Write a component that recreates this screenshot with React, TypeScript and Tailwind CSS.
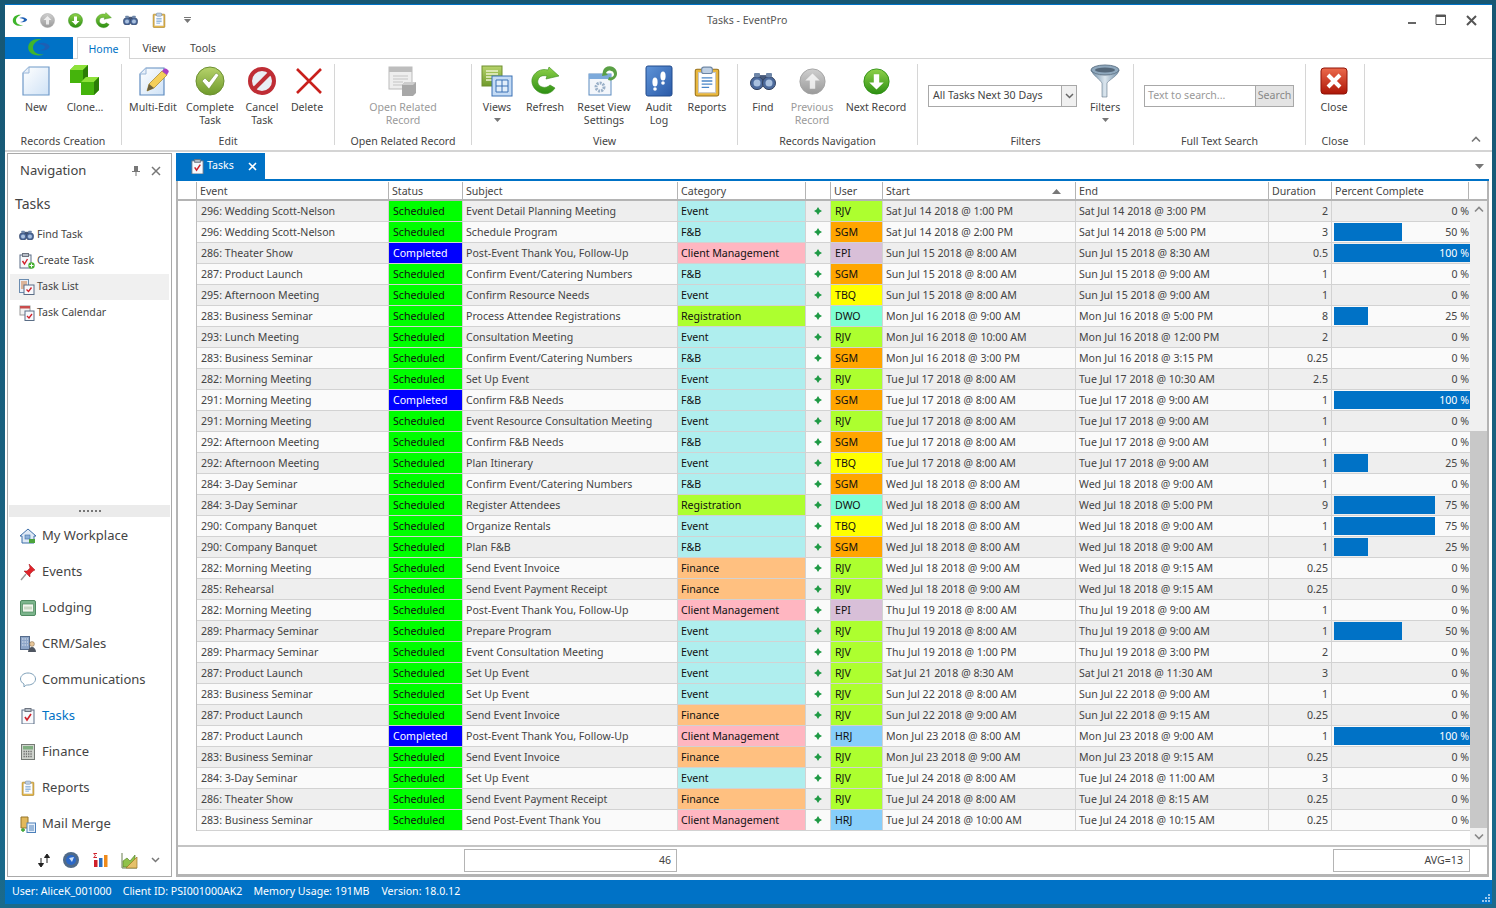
import React from "react";

type IconProps = { s?: number };

const rowData = `296: Wedding Scott-Nelson|S|Event Detail Planning Meeting|Event|RJV|Sat Jul 14 2018 @ 1:00 PM|Sat Jul 14 2018 @ 3:00 PM|2|0
296: Wedding Scott-Nelson|S|Schedule Program|F&B|SGM|Sat Jul 14 2018 @ 2:00 PM|Sat Jul 14 2018 @ 5:00 PM|3|50
286: Theater Show|C|Post-Event Thank You, Follow-Up|Client Management|EPI|Sun Jul 15 2018 @ 8:00 AM|Sun Jul 15 2018 @ 8:30 AM|0.5|100
287: Product Launch|S|Confirm Event/Catering Numbers|F&B|SGM|Sun Jul 15 2018 @ 8:00 AM|Sun Jul 15 2018 @ 9:00 AM|1|0
295: Afternoon Meeting|S|Confirm Resource Needs|Event|TBQ|Sun Jul 15 2018 @ 8:00 AM|Sun Jul 15 2018 @ 9:00 AM|1|0
283: Business Seminar|S|Process Attendee Registrations|Registration|DWO|Mon Jul 16 2018 @ 9:00 AM|Mon Jul 16 2018 @ 5:00 PM|8|25
293: Lunch Meeting|S|Consultation Meeting|Event|RJV|Mon Jul 16 2018 @ 10:00 AM|Mon Jul 16 2018 @ 12:00 PM|2|0
283: Business Seminar|S|Confirm Event/Catering Numbers|F&B|SGM|Mon Jul 16 2018 @ 3:00 PM|Mon Jul 16 2018 @ 3:15 PM|0.25|0
282: Morning Meeting|S|Set Up Event|Event|RJV|Tue Jul 17 2018 @ 8:00 AM|Tue Jul 17 2018 @ 10:30 AM|2.5|0
291: Morning Meeting|C|Confirm F&B Needs|F&B|SGM|Tue Jul 17 2018 @ 8:00 AM|Tue Jul 17 2018 @ 9:00 AM|1|100
291: Morning Meeting|S|Event Resource Consultation Meeting|Event|RJV|Tue Jul 17 2018 @ 8:00 AM|Tue Jul 17 2018 @ 9:00 AM|1|0
292: Afternoon Meeting|S|Confirm F&B Needs|F&B|SGM|Tue Jul 17 2018 @ 8:00 AM|Tue Jul 17 2018 @ 9:00 AM|1|0
292: Afternoon Meeting|S|Plan Itinerary|Event|TBQ|Tue Jul 17 2018 @ 8:00 AM|Tue Jul 17 2018 @ 9:00 AM|1|25
284: 3-Day Seminar|S|Confirm Event/Catering Numbers|F&B|SGM|Wed Jul 18 2018 @ 8:00 AM|Wed Jul 18 2018 @ 9:00 AM|1|0
284: 3-Day Seminar|S|Register Attendees|Registration|DWO|Wed Jul 18 2018 @ 8:00 AM|Wed Jul 18 2018 @ 5:00 PM|9|75
290: Company Banquet|S|Organize Rentals|Event|TBQ|Wed Jul 18 2018 @ 8:00 AM|Wed Jul 18 2018 @ 9:00 AM|1|75
290: Company Banquet|S|Plan F&B|F&B|SGM|Wed Jul 18 2018 @ 8:00 AM|Wed Jul 18 2018 @ 9:00 AM|1|25
282: Morning Meeting|S|Send Event Invoice|Finance|RJV|Wed Jul 18 2018 @ 9:00 AM|Wed Jul 18 2018 @ 9:15 AM|0.25|0
285: Rehearsal|S|Send Event Payment Receipt|Finance|RJV|Wed Jul 18 2018 @ 9:00 AM|Wed Jul 18 2018 @ 9:15 AM|0.25|0
282: Morning Meeting|S|Post-Event Thank You, Follow-Up|Client Management|EPI|Thu Jul 19 2018 @ 8:00 AM|Thu Jul 19 2018 @ 9:00 AM|1|0
289: Pharmacy Seminar|S|Prepare Program|Event|RJV|Thu Jul 19 2018 @ 8:00 AM|Thu Jul 19 2018 @ 9:00 AM|1|50
289: Pharmacy Seminar|S|Event Consultation Meeting|Event|RJV|Thu Jul 19 2018 @ 1:00 PM|Thu Jul 19 2018 @ 3:00 PM|2|0
287: Product Launch|S|Set Up Event|Event|RJV|Sat Jul 21 2018 @ 8:30 AM|Sat Jul 21 2018 @ 11:30 AM|3|0
283: Business Seminar|S|Set Up Event|Event|RJV|Sun Jul 22 2018 @ 8:00 AM|Sun Jul 22 2018 @ 9:00 AM|1|0
287: Product Launch|S|Send Event Invoice|Finance|RJV|Sun Jul 22 2018 @ 9:00 AM|Sun Jul 22 2018 @ 9:15 AM|0.25|0
287: Product Launch|C|Post-Event Thank You, Follow-Up|Client Management|HRJ|Mon Jul 23 2018 @ 8:00 AM|Mon Jul 23 2018 @ 9:00 AM|1|100
283: Business Seminar|S|Send Event Invoice|Finance|RJV|Mon Jul 23 2018 @ 9:00 AM|Mon Jul 23 2018 @ 9:15 AM|0.25|0
284: 3-Day Seminar|S|Set Up Event|Event|RJV|Tue Jul 24 2018 @ 8:00 AM|Tue Jul 24 2018 @ 11:00 AM|3|0
286: Theater Show|S|Send Event Payment Receipt|Finance|RJV|Tue Jul 24 2018 @ 8:00 AM|Tue Jul 24 2018 @ 8:15 AM|0.25|0
283: Business Seminar|S|Send Post-Event Thank You|Client Management|HRJ|Tue Jul 24 2018 @ 10:00 AM|Tue Jul 24 2018 @ 10:15 AM|0.25|0`
  .split("\n")
  .map((line) => line.split("|"));

const categoryBg: Record<string, string> = {
  Event: "bg-[#afeeee]",
  "F&B": "bg-[#afeeee]",
  "Client Management": "bg-[#ffb6c1]",
  Registration: "bg-[#adff2f]",
  Finance: "bg-[#ffc080]",
};

const userBg: Record<string, string> = {
  RJV: "bg-[#adff2f]",
  SGM: "bg-[#ffa500]",
  EPI: "bg-[#d8bfd8]",
  TBQ: "bg-[#ffff00]",
  DWO: "bg-[#7fffd4]",
  HRJ: "bg-[#87cefa]",
};

const barWidth: Record<string, string> = {
  "25": "w-[34px]",
  "50": "w-[68px]",
  "75": "w-[101px]",
  "100": "w-[136px]",
};

const gridCols =
  "grid grid-cols-[192px_74px_215px_128px_25px_52px_193px_193px_63px_138px]";

const Defs = () => (
  <svg className="block h-0 w-0">
    <defs>
      <linearGradient id="gGreen" x1="0" y1="0" x2="0" y2="1">
        <stop offset="0" stopColor="#8fd14a" />
        <stop offset="1" stopColor="#2c8f12" />
      </linearGradient>
      <linearGradient id="gOlive" x1="0" y1="0" x2="0" y2="1">
        <stop offset="0" stopColor="#b7d36c" />
        <stop offset="1" stopColor="#6f9a2b" />
      </linearGradient>
      <linearGradient id="gGray" x1="0" y1="0" x2="0" y2="1">
        <stop offset="0" stopColor="#cfcfcf" />
        <stop offset="1" stopColor="#9a9a9a" />
      </linearGradient>
      <linearGradient id="gPaper" x1="0" y1="0" x2="1" y2="1">
        <stop offset="0" stopColor="#ffffff" />
        <stop offset="1" stopColor="#cfe2f6" />
      </linearGradient>
      <linearGradient id="gBlue" x1="0" y1="0" x2="1" y2="1">
        <stop offset="0" stopColor="#5f94d8" />
        <stop offset="1" stopColor="#2a5aa8" />
      </linearGradient>
      <linearGradient id="gRed" x1="0" y1="0" x2="0" y2="1">
        <stop offset="0" stopColor="#ec6a4c" />
        <stop offset="1" stopColor="#ad1607" />
      </linearGradient>
      <linearGradient id="gSteel" x1="0" y1="0" x2="1" y2="0">
        <stop offset="0" stopColor="#6f8ea8" />
        <stop offset=".5" stopColor="#dbe6ee" />
        <stop offset="1" stopColor="#6f8ea8" />
      </linearGradient>
    </defs>
  </svg>
);

const Logo = ({ s = 16 }: IconProps) => (
  <svg width={s} height={s * 0.8} viewBox="0 0 20 16">
    <path d="M12 1C6 0 1 3 1 8c0 5 6 8 13 6-5 0-9-2-9-6 0-3 3-6 7-7z" fill="#3fb52c" />
    <path d="M9 5c4-2 8-1 10 2-1 3-5 4-9 3 3 0 5-1 5-3-1-1-4-2-6-2z" fill="#1d5fb4" />
  </svg>
);

const RoundArrow = ({ s = 27, up, gray }: IconProps & { up?: boolean; gray?: boolean }) => (
  <svg width={s} height={s} viewBox="0 0 30 30">
    <circle cx="15" cy="15" r="14" fill={gray ? "url(#gGray)" : "url(#gGreen)"} stroke={gray ? "#a0a0a0" : "#2c8f12"} />
    <path
      d={up ? "M15 6l8 8h-5v9h-6v-9H7z" : "M15 24l8-8h-5V7h-6v9H7z"}
      fill="#fff"
      opacity={gray ? 0.75 : 1}
    />
  </svg>
);

const Refresh = ({ s = 30 }: IconProps) => (
  <svg width={s} height={s} viewBox="0 0 30 30">
    <path
      d="M25 22c-3 5-9 7-14 5C5 25 1 19 2 13 4 6 11 2 18 4l1-3 10 9-13 3 1-3c-4-1-8 0-9 4-1 3 1 6 4 7 3 1 6 0 8-2z"
      fill="url(#gGreen)"
      stroke="#3a8f1c"
      strokeWidth=".6"
    />
  </svg>
);

const Binoculars = ({ s = 26 }: IconProps) => (
  <svg width={s} height={s * 0.7} viewBox="0 0 26 18">
    <rect x="9" y="3" width="8" height="6" fill="#47597a" />
    <circle cx="7" cy="11" r="6.5" fill="#4c6a9c" stroke="#33415c" />
    <circle cx="19" cy="11" r="6.5" fill="#4c6a9c" stroke="#33415c" />
    <circle cx="7" cy="11" r="3.5" fill="#a9c0de" />
    <circle cx="19" cy="11" r="3.5" fill="#a9c0de" />
    <rect x="4" y="1" width="6" height="4" rx="1" fill="#6e86a8" />
    <rect x="16" y="1" width="6" height="4" rx="1" fill="#6e86a8" />
  </svg>
);

const Clipboard = ({ s = 30 }: IconProps) => (
  <svg width={s} height={s} viewBox="0 0 30 30">
    <rect x="4" y="4" width="22" height="25" rx="1.5" fill="#e9b73c" stroke="#96701a" />
    <rect x="7" y="7" width="16" height="19" fill="#fff" stroke="#c7c7c7" />
    <rect x="10" y="2" width="10" height="6" rx="2" fill="#bfd0e4" stroke="#6d86a4" />
    <path d="M10 12h10M10 15h10M10 18h10M10 21h7" stroke="#4a86c8" strokeWidth="1.2" />
  </svg>
);

const NewDoc = () => (
  <svg width="30" height="32" viewBox="0 0 30 32">
    <path d="M8 2h20v28H2V8z" fill="url(#gPaper)" stroke="#6f99c8" strokeWidth="1.2" />
    <path d="M8 2v6H2" fill="#e8f0f9" stroke="#9ab7d8" />
  </svg>
);

const Cube = ({ x, y }: { x: number; y: number }) => (
  <g transform={`translate(${x} ${y})`}>
    <path d="M0 5l5-5h13v13l-5 5H0z" fill="#45b40c" />
    <path d="M0 5l5-5h13l-5 5z" fill="#8ee23a" />
    <path d="M13 5l5-5v13l-5 5z" fill="#2a7d06" />
  </g>
);

const Clone = () => (
  <svg width="30" height="32" viewBox="0 0 30 32">
    <Cube x={0} y={0} />
    <Cube x={11} y={12} />
  </svg>
);

const MultiEdit = () => (
  <svg width="30" height="32" viewBox="0 0 30 32" className="ml-[2px]">
    <path d="M7 3h18v27H1V9z" fill="url(#gPaper)" stroke="#5f8cc0" strokeWidth="1.2" />
    <path d="M7 3v6H1" fill="#e8f0f9" stroke="#9ab7d8" />
    <path d="M8 26l2-7L23 6l5 4-13 13z" fill="#f4cf5a" stroke="#a5842a" strokeWidth=".7" />
    <path d="M23 6l2-2c1-1 3 0 4 1s1 2 0 3l-1 2z" fill="#a93fc4" />
    <path d="M8 26l2-7 5 4z" fill="#333" opacity=".7" />
  </svg>
);

const Complete = () => (
  <svg width="30" height="30" viewBox="0 0 30 30">
    <circle cx="15" cy="15" r="14" fill="url(#gOlive)" stroke="#6b8f30" />
    <path d="M7 15l3-3 4 4 7-9 3 2-10 14z" fill="#fff" stroke="#5f8227" strokeWidth=".5" />
  </svg>
);

const Cancel = () => (
  <svg width="30" height="30" viewBox="0 0 30 30">
    <circle cx="15" cy="15" r="12" fill="#e9eef5" stroke="#bf2d35" strokeWidth="4" />
    <path d="M7 23L23 7" stroke="#bf2d35" strokeWidth="4" />
  </svg>
);

const DeleteX = () => (
  <svg width="30" height="30" viewBox="0 0 30 30" className="ml-[3px]">
    <path d="M3 3l24 24M27 3L3 27" stroke="#c9201c" strokeWidth="2.6" />
  </svg>
);

const OpenRelated = () => (
  <svg width="30" height="32" viewBox="0 0 30 32">
    <rect x="1" y="2" width="23" height="22" fill="#eee" stroke="#bbb" />
    <rect x="1" y="2" width="23" height="5" fill="#bdbdbd" />
    <path d="M5 11h15M5 14h15M5 17h10M5 20h10" stroke="#c4c4c4" />
    <path d="M14 20l3-3h11v11l-3 3H14z" fill="#a8a8a8" />
    <path d="M14 20l3-3h11l-3 3z" fill="#cdcdcd" />
  </svg>
);

const Views = () => (
  <svg width="32" height="32" viewBox="0 0 32 32">
    <rect x="1" y="1" width="20" height="20" fill="url(#gOlive)" stroke="#6f8f2f" />
    <path d="M5 6h12M5 9h12M5 12h12M5 15h8" stroke="#eef4d0" strokeWidth="1.4" />
    <rect x="11" y="11" width="20" height="20" fill="#c4dbf5" stroke="#3a70b4" />
    <path d="M15 15h12v12H15zM15 21h12M21 15v12" fill="#e2eefa" stroke="#3a70b4" />
  </svg>
);

const ResetView = () => (
  <svg width="32" height="32" viewBox="0 0 32 32">
    <rect x="1" y="9" width="22" height="21" fill="#f3f6fb" stroke="#5c8cc0" />
    <rect x="1" y="9" width="22" height="5" fill="#7daadb" />
    <circle cx="12" cy="22" r="4" fill="none" stroke="#9ab0c8" strokeWidth="3" strokeDasharray="2 1" />
    <path d="M15 6c1-4 6-6 10-4 4 2 5 7 3 10-2 3-5 4-8 3l1-3c2 1 4 0 5-2 0-2-1-4-3-4-2-1-4 0-5 2l2 2-6 1z" fill="#5aa045" />
  </svg>
);

const Audit = () => (
  <svg width="28" height="32" viewBox="0 0 28 32">
    <rect x="1" y="1" width="26" height="30" rx="2" fill="url(#gBlue)" stroke="#214a8c" />
    <ellipse cx="10" cy="17" rx="2.6" ry="4.5" fill="#fff" />
    <circle cx="10" cy="24" r="1.8" fill="#fff" />
    <ellipse cx="18" cy="11" rx="2.6" ry="4.5" fill="#fff" />
    <circle cx="18" cy="18" r="1.8" fill="#fff" />
  </svg>
);

const Funnel = () => (
  <svg width="30" height="34" viewBox="0 0 30 34">
    <ellipse cx="15" cy="6" rx="14" ry="5" fill="#8fa8bd" stroke="#64798c" />
    <ellipse cx="15" cy="6" rx="10" ry="2.5" fill="#55687a" />
    <path d="M1 6c2 6 9 9 11 13v14h5V19c3-4 11-7 12-13-3 7-25 7-28 0z" fill="url(#gSteel)" stroke="#64798c" strokeWidth=".6" />
  </svg>
);

const CloseRed = () => (
  <svg width="28" height="28" viewBox="0 0 28 28">
    <rect x="1" y="1" width="26" height="26" rx="3" fill="url(#gRed)" stroke="#8f1206" />
    <path d="M8 8l12 12M20 8L8 20" stroke="#fff" strokeWidth="4" />
  </svg>
);

const TaskClip = ({ s = 16 }: IconProps) => (
  <svg width={s} height={s} viewBox="0 0 16 16">
    <rect x="2" y="2" width="12" height="14" fill="#f7f9fc" stroke="#5a6d86" />
    <rect x="5" y="0.5" width="6" height="3" fill="#b9bfc8" stroke="#6d7480" />
    <path d="M5 9l2 3 4-6" fill="none" stroke="#d0202a" strokeWidth="1.6" />
  </svg>
);

const NavIcons: Record<string, React.ReactNode> = {
  "My Workplace": (
    <svg width="16" height="16" viewBox="0 0 16 16">
      <path d="M8 1L0 8h2v7h12V8h2z" fill="#dfe9f5" stroke="#3d6ea8" />
      <rect x="5" y="7" width="5" height="4" fill="#8db0d8" stroke="#3d6ea8" strokeWidth=".6" />
      <rect x="9" y="11" width="6" height="4" fill="#4ba33a" />
    </svg>
  ),
  Events: (
    <svg width="16" height="18" viewBox="0 0 16 18">
      <path d="M9 1l6 6-2 1-3 3 0 3-6-6 3 0 3-3z" fill="#e0232a" stroke="#a11218" strokeWidth=".5" />
      <path d="M6 11l-5 6" stroke="#999" strokeWidth="1.4" />
    </svg>
  ),
  Lodging: (
    <svg width="16" height="16" viewBox="0 0 16 16">
      <rect x="0.5" y="0.5" width="15" height="15" rx="1.5" fill="#7cb58c" stroke="#4f8a60" />
      <rect x="2.5" y="4" width="11" height="8" fill="#f2f6ee" stroke="#4f8a60" strokeWidth=".7" />
      <rect x="4" y="6.5" width="8" height="3" fill="#c9d8c4" />
    </svg>
  ),
  "CRM/Sales": (
    <svg width="16" height="16" viewBox="0 0 16 16">
      <rect x="0.5" y="0.5" width="9" height="13" fill="#8ea6c8" stroke="#566c8c" />
      <path d="M2 3h6M2 6h6M2 9h6" stroke="#dbe4f0" strokeDasharray="1.5 1" />
      <circle cx="12" cy="8" r="2.4" fill="#e8c79a" stroke="#7a6040" strokeWidth=".5" />
      <path d="M8 16c0-3 2-5 4-5s4 2 4 5z" fill="#4e5560" />
    </svg>
  ),
  Communications: (
    <svg width="16" height="16" viewBox="0 0 16 16">
      <path d="M8 1c4 0 7.5 2.5 7.5 6S12 13 8 13c-1 0-2 0-3 1l-1 1v-3C2 11 .5 9 .5 7 .5 3.500 4 1 8 1z" fill="#fff" stroke="#7d9fb8" />
    </svg>
  ),
  Tasks: <TaskClip />,
  Finance: (
    <svg width="14" height="16" viewBox="0 0 14 16">
      <rect x="0.5" y="0.5" width="13" height="15" fill="#cfd3cd" stroke="#757a75" />
      <rect x="2" y="2" width="10" height="3.500" fill="#7fae80" />
      <path d="M2.500 7.500h9M2.500 10h9M2.500 12.500h9" stroke="#6b6b6b" strokeWidth="1.300" strokeDasharray="1.300 1" />
    </svg>
  ),
  Reports: <Clipboard s={16} />,
  "Mail Merge": (
    <svg width="16" height="17" viewBox="0 0 16 17">
      <path d="M1 1h7v11H1z" fill="#e2b85a" stroke="#94742a" />
      <rect x="7" y="7" width="8.500" height="9.500" fill="#e8f0fa" stroke="#4c80ba" />
      <path d="M9 10h5M9 12h5M9 14h5" stroke="#4c80ba" />
      <path d="M1 14h4M3 12v4" stroke="#36a12a" strokeWidth="1.300" />
    </svg>
  ),
};

const ArrowDropIcon = () => (
  <svg width="7" height="4" viewBox="0 0 7 4" className="block">
    <path d="M0 0h7L3.500 4z" fill="#777" />
  </svg>
);

const RibbonButton = ({
  w,
  icon,
  label,
  label2,
  disabled,
  drop,
}: {
  w: string;
  icon: React.ReactNode;
  label: string;
  label2?: string;
  disabled?: boolean;
  drop?: boolean;
}) => (
  <div className={`flex flex-col items-center ${w} ${disabled ? "text-[#9a9a9a]" : "text-[#444]"}`}>
    <div className="flex h-[34px] items-center justify-center">{icon}</div>
    <div className="mt-[3px] h-[13px] whitespace-nowrap leading-[13px]">{label}</div>
    {label2 && <div className="h-[13px] whitespace-nowrap leading-[13px]">{label2}</div>}
    {drop && (
      <div className="mt-[4px]">
        <ArrowDropIcon />
      </div>
    )}
  </div>
);

const RibbonGroup = ({
  w,
  label,
  children,
  className = "",
}: {
  w: string;
  label: string;
  children: React.ReactNode;
  className?: string;
}) => (
  <div className={`flex h-[81px] flex-col border-r border-[#d6d6d6] ${w}`}>
    <div className={`flex h-[71px] shrink-0 items-start ${className}`}>{children}</div>
    <div className="h-[13px] shrink-0 text-center leading-[13px] text-[#444]">{label}</div>
  </div>
);

const Ribbon = () => (
  <div className="flex h-[93px] border-b-2 border-[#d4d4d4] pt-[5px] text-[10.6px]">
    <RibbonGroup w="w-[117px]" label="Records Creation" className="pl-[9px]">
      <RibbonButton w="w-[44px]" icon={<NewDoc />} label="New" />
      <RibbonButton w="w-[54px]" icon={<Clone />} label="Clone…" />
    </RibbonGroup>
    <RibbonGroup w="w-[213px]" label="Edit" className="pl-[3px]">
      <RibbonButton w="w-[56px]" icon={<MultiEdit />} label="Multi-Edit" />
      <RibbonButton w="w-[58px]" icon={<Complete />} label="Complete" label2="Task" />
      <RibbonButton w="w-[46px]" icon={<Cancel />} label="Cancel" label2="Task" />
      <RibbonButton w="w-[44px]" icon={<DeleteX />} label="Delete" />
    </RibbonGroup>
    <RibbonGroup w="w-[137px]" label="Open Related Record" className="justify-center">
      <RibbonButton w="w-[90px]" icon={<OpenRelated />} label="Open Related" label2="Record" disabled />
    </RibbonGroup>
    <RibbonGroup w="w-[266px]" label="View">
      <RibbonButton w="w-[50px]" icon={<Views />} label="Views" drop />
      <RibbonButton w="w-[46px]" icon={<Refresh />} label="Refresh" />
      <RibbonButton w="w-[72px]" icon={<ResetView />} label="Reset View" label2="Settings" />
      <RibbonButton w="w-[38px]" icon={<Audit />} label="Audit" label2="Log" />
      <RibbonButton w="w-[58px]" icon={<Clipboard s={32} />} label="Reports" />
    </RibbonGroup>
    <RibbonGroup w="w-[180px]" label="Records Navigation">
      <RibbonButton w="w-[50px]" icon={<Binoculars />} label="Find" />
      <RibbonButton w="w-[48px]" icon={<RoundArrow up gray />} label="Previous" label2="Record" disabled />
      <RibbonButton w="w-[80px]" icon={<RoundArrow />} label="Next Record" />
    </RibbonGroup>
    <RibbonGroup w="w-[216px]" label="Filters" className="pl-[10px]">
      <div className="mt-[21px] flex h-[22px] w-[150px] border border-[#a8a8a8] text-[#444]">
        <div className="flex-1 px-[4px] leading-[19px]">All Tasks Next 30 Days</div>
        <div className="flex w-[15px] items-center justify-center border-l border-[#a8a8a8] bg-[#f0f0f0]">
          <svg width="9" height="6" viewBox="0 0 9 6">
            <path d="M1 1l3.500 3.500L8 1" fill="none" stroke="#666" strokeWidth="1.500" />
          </svg>
        </div>
      </div>
      <RibbonButton w="w-[56px]" icon={<Funnel />} label="Filters" drop />
    </RibbonGroup>
    <RibbonGroup w="w-[172px]" label="Full Text Search" className="pl-[10px]">
      <div className="mt-[21px] flex h-[22px] w-[150px] border border-[#a8a8a8]">
        <div className="flex-1 px-[3px] leading-[19px] text-[#999]">Text to search...</div>
        <div className="w-[38px] border-l border-[#a8a8a8] bg-[#e4e4e4] text-center leading-[19px] text-[#888]">Search</div>
      </div>
    </RibbonGroup>
    <RibbonGroup w="w-[59px]" label="Close">
      <RibbonButton w="w-[56px]" icon={<CloseRed />} label="Close" />
    </RibbonGroup>
    <div className="ml-auto mr-[11px] flex items-end pb-[7px]">
      <svg width="10" height="7" viewBox="0 0 10 7">
        <path d="M1 5.500l4-4 4 4" fill="none" stroke="#777" strokeWidth="1.600" />
      </svg>
    </div>
  </div>
);

const TitleBar = () => (
  <div className="flex h-[32px] items-center pb-[2px]">
    <div className="flex items-center gap-[0px] pl-[6px]">
      <div className="flex w-[17px] justify-center"><Logo /></div>
      <div className="ml-[11px] flex w-[16px] justify-center"><RoundArrow s={15} up gray /></div>
      <div className="ml-[12px] flex w-[16px] justify-center"><RoundArrow s={15} /></div>
      <div className="ml-[12px] flex w-[17px] justify-center"><Refresh s={17} /></div>
      <div className="ml-[11px] flex w-[15px] justify-center"><Binoculars s={15} /></div>
      <div className="ml-[13px] flex w-[16px] justify-center"><Clipboard s={16} /></div>
      <div className="ml-[17px]">
        <svg width="7" height="6" viewBox="0 0 7 6" className="block">
          <path d="M0 0h7v1H0zM0 2h7L3.500 6z" fill="#777" />
        </svg>
      </div>
    </div>
    <div className="ml-[516px] pt-[2px] text-[10.6px] text-[#555]">Tasks - EventPro</div>
    <div className="ml-auto flex items-center pr-[15px]">
      <svg width="10" height="10" viewBox="0 0 10 10" className="mr-[18px]">
        <rect x="1" y="7" width="8" height="2" fill="#666" />
      </svg>
      <svg width="12" height="12" viewBox="0 0 12 12" className="mr-[19px]">
        <path d="M1 1h9.500v9.500H1z" fill="none" stroke="#555" />
        <rect x="1" y="1" width="9.500" height="2" fill="#555" />
      </svg>
      <svg width="11" height="11" viewBox="0 0 11 11">
        <path d="M1 1l9 9M10 1l-9 9" stroke="#555" strokeWidth="2" />
      </svg>
    </div>
  </div>
);

const TabRow = () => (
  <div className="flex h-[22px] border-b border-[#d4d4d4] text-[10.6px] text-[#444]">
    <div className="flex h-[22px] w-[68px] items-center justify-center bg-[#0072c6]">
      <Logo s={24} />
    </div>
    <div className="ml-[4px] h-[22px] w-[53px] border border-b-0 border-[#d4d4d4] bg-white text-center leading-[22px] text-[#0072c6]">
      Home
    </div>
    <div className="w-[48px] text-center leading-[22px]">View</div>
    <div className="w-[50px] text-center leading-[22px]">Tools</div>
  </div>
);

const NavPanel = () => (
  <div className="flex w-[165px] flex-col border border-[#a9a9a9] bg-white text-[#444]">
    <div className="flex h-[32px] items-center pl-[12px] pr-[10px] pt-[2px]">
      <span className="text-[13px] text-[#444]">Navigation</span>
      <svg width="8" height="10" viewBox="0 0 8 10" className="ml-auto">
        <path d="M2 0h4v5h2v1H4.500v4h-1V6H0V5h2z" fill="#777" />
      </svg>
      <svg width="10" height="10" viewBox="0 0 10 10" className="ml-[11px]">
        <path d="M1 1l8 8M9 1l-8 8" stroke="#777" strokeWidth="1.500" />
      </svg>
    </div>
    <div className="ml-[7px] mt-[8px] text-[14px] leading-[20px]">Tasks</div>
    <div className="mt-[8px] text-[10.6px]">
      {[
        ["Find Task", <Binoculars s={15} />],
        [
          "Create Task",
          <svg width="16" height="16" viewBox="0 0 16 16">
            <rect x="1" y="2" width="11" height="13" fill="#f7f9fc" stroke="#5a6d86" />
            <rect x="3.500" y="0.500" width="6" height="3" fill="#b9bfc8" stroke="#6d7480" />
            <path d="M3.500 8l2 3 3-5" fill="none" stroke="#d0202a" strokeWidth="1.400" />
            <circle cx="12.500" cy="12.500" r="3.200" fill="#46b030" />
            <path d="M10.500 12.500h4M12.500 10.500v4" stroke="#fff" />
          </svg>,
        ],
        [
          "Task List",
          <svg width="16" height="16" viewBox="0 0 16 16">
            <rect x="0.500" y="0.500" width="9" height="13" fill="#e9f0f9" stroke="#6b8cb0" />
            <path d="M2 3h6M2 5h6M2 7h6M2 9h6" stroke="#d07a3c" />
            <rect x="5" y="6" width="10" height="9.500" fill="#f7f9fc" stroke="#5a6d86" />
            <path d="M7.500 10.500l2 2 3-4" fill="none" stroke="#d0202a" strokeWidth="1.300" />
          </svg>,
        ],
        [
          "Task Calendar",
          <svg width="16" height="16" viewBox="0 0 16 16">
            <rect x="1" y="1" width="10" height="9" fill="#f2f2f2" stroke="#999" />
            <rect x="1" y="1" width="10" height="2.500" fill="#c84c4c" />
            <rect x="6" y="6" width="9" height="9.500" fill="#f7f9fc" stroke="#5a6d86" />
            <path d="M8 11l2 2 3-4" fill="none" stroke="#d0202a" strokeWidth="1.300" />
          </svg>,
        ],
      ].map(([label, icon]) => (
        <div
          key={label as string}
          className={`mx-[2px] flex h-[26px] items-center pl-[7px] ${label === "Task List" ? "bg-[#f0f0f0]" : ""}`}
        >
          <span className="flex w-[19px] justify-center">{icon}</span>
          <span className="ml-[1px]">{label}</span>
        </div>
      ))}
    </div>
    <div className="flex-1" />
    <div className="mx-[1px] mb-[1px] flex h-[12px] items-center justify-center bg-[#ebebeb]">
      <div className="h-[2px] w-[22px] [background:repeating-linear-gradient(90deg,#777_0_2px,transparent_2px_4px)]" />
    </div>
    <div>
      {["My Workplace", "Events", "Lodging", "CRM/Sales", "Communications", "Tasks", "Finance", "Reports", "Mail Merge"].map((n) => (
        <div key={n} className="flex h-[36px] items-center pl-[12px] text-[13px]">
          <span className="flex w-[16px] justify-center">{NavIcons[n]}</span>
          <span className={`ml-[6px] ${n === "Tasks" ? "text-[#0072c6]" : ""}`}>{n}</span>
        </div>
      ))}
    </div>
    <div className="mt-[2px] flex h-[32px] items-center pl-[29px]">
      <svg width="14" height="15" viewBox="0 0 14 15" className="mr-[11px]">
        <path d="M4 5v8M1.500 10.500L4 14l2.500-3.500zM10 10V2M7.500 4.500L10 1l2.500 3.500z" stroke="#222" fill="#222" strokeWidth="1" />
      </svg>
      <svg width="18" height="18" viewBox="0 0 18 18" className="mr-[12px]">
        <circle cx="9" cy="9" r="8" fill="#506a88" />
        <circle cx="9" cy="9" r="5" fill="#2b68c8" />
        <path d="M7 7l5-1-2 5z" fill="#cfe0f5" />
      </svg>
      <svg width="16" height="14" viewBox="0 0 16 14" className="mr-[13px]">
        <rect x="2" y="7" width="3.500" height="7" fill="#d0202a" />
        <rect x="7" y="5" width="3.500" height="9" fill="#2a6fc0" />
        <rect x="12" y="2" width="3.500" height="12" fill="#ef8a1a" />
        <path d="M1 0h4v1H2.500l1.500 1.500L2.500 4H5v1H1l2-2.500z" fill="#d0202a" />
      </svg>
      <svg width="17" height="17" viewBox="0 0 17 17" className="mr-[13px]">
        <path d="M1 1v15h15" fill="none" stroke="#6a7f50" />
        <path d="M2 15V9l4-3 3 3 5-6v12z" fill="#8fc24a" stroke="#4f7a20" strokeWidth=".6" />
        <path d="M5 16l11-11v11z" fill="#e6c16a" stroke="#9a7520" strokeWidth=".7" />
      </svg>
      <svg width="9" height="6" viewBox="0 0 9 6">
        <path d="M1 1l3.500 3.500L8 1" fill="none" stroke="#777" strokeWidth="1.500" />
      </svg>
    </div>
  </div>
);

const Header = () => (
  <div className="flex h-[20px] border-b-2 border-[#b4b4b4] bg-white pt-[1px] text-[#444]">
    <div className="w-[18px] shrink-0" />
    <div className={`${gridCols} shrink-0`}>
      {["Event", "Status", "Subject", "Category", "", "User", "Start", "End", "Duration", "Percent Complete"].map((h) => (
        <div key={h} className="flex items-center border-l border-[#b4b4b4] pl-[3px] pt-[2px] leading-[15px] last:border-r">
          {h}
          {h === "Start" && (
            <svg width="9" height="5" viewBox="0 0 9 5" className="ml-auto mr-[14px]">
              <path d="M0 5l4.500-5L9 5z" fill="#777" />
            </svg>
          )}
        </div>
      ))}
    </div>
  </div>
);

const Row = ({ r, i }: { r: string[]; i: number }) => {
  const [event, status, subject, category, user, start, end, duration, pct] = r;
  const base = i % 2 === 0 ? "bg-[#eeeeee]" : "bg-[#fafafa]";
  const cell = "flex items-center overflow-hidden whitespace-nowrap border-b border-r border-[#d2d2d2] pl-[3px] pt-[2px]";
  return (
    <div className={`${gridCols} h-[21px] text-[#444]`}>
      <div className={`${cell} ${base} !pl-[4px] shadow-[-1px_0_0_#bdbdbd]`}>{event}</div>
      <div className={`${cell} !pl-[4px] ${status === "C" ? "bg-[#0000ff] text-white" : "bg-[#00ff00] text-[#111]"}`}>
        {status === "C" ? "Completed" : "Scheduled"}
      </div>
      <div className={`${cell} ${base}`}>{subject}</div>
      <div className={`${cell} ${categoryBg[category]} text-[#111]`}>{category}</div>
      <div className={`${cell} ${base} justify-center !pl-0 !pt-0`}>
        <svg width="8" height="8" viewBox="0 0 8 8">
          <path d="M4 0l1.500 2.500L8 4 5.500 5.500 4 8 2.500 5.500 0 4l2.500-1.500z" fill="#1f9a45" />
        </svg>
      </div>
      <div className={`${cell} !pl-[4px] ${userBg[user]} text-[#111]`}>{user}</div>
      <div className={`${cell} ${base}`}>{start}</div>
      <div className={`${cell} ${base}`}>{end}</div>
      <div className={`${cell} ${base} justify-end pr-[3px]`}>{duration}</div>
      <div className={`relative flex items-center justify-end border-b border-[#d2d2d2] pl-[2px] pr-[1px] pt-[2px] ${base}`}>
        {pct !== "0" && <div className={`absolute bottom-[1px] left-[2px] top-[1px] bg-[#0072c6] ${barWidth[pct]}`} />}
        <span className={`relative ${pct === "100" ? "text-white" : ""}`}>{pct} %</span>
      </div>
    </div>
  );
};

const Scrollbar = () => (
  <div className="flex w-[17px] flex-col bg-[#f0f0f0]">
    <div className="flex h-[17px] items-center justify-center">
      <svg width="10" height="7" viewBox="0 0 10 7">
        <path d="M1 5.500l4-4 4 4" fill="none" stroke="#888" strokeWidth="1.600" />
      </svg>
    </div>
    <div className="h-[213px]" />
    <div className="flex-1 bg-[#c8c8c8]" />
    <div className="flex h-[17px] items-center justify-center">
      <svg width="10" height="7" viewBox="0 0 10 7">
        <path d="M1 1.500l4 4 4-4" fill="none" stroke="#888" strokeWidth="1.600" />
      </svg>
    </div>
  </div>
);

const Content = () => (
  <div className="flex w-[1313px] flex-col">
    <div className="flex h-[26px] items-center">
      <div className="flex h-[26px] w-[89px] items-center bg-[#0072c6] pl-[14px] text-[10.6px] text-white">
        <TaskClip s={15} />
        <span className="ml-[2px]">Tasks</span>
        <svg width="9" height="9" viewBox="0 0 9 9" className="ml-[14px]">
          <path d="M1 1l7 7M8 1l-7 7" stroke="#fff" strokeWidth="1.600" />
        </svg>
      </div>
      <svg width="9" height="5" viewBox="0 0 9 5" className="ml-auto mr-[5px]">
        <path d="M0 0h9L4.500 5z" fill="#777" />
      </svg>
    </div>
    <div className="h-[2px] bg-[#0072c6]" />
    <div className="flex flex-1 flex-col border-x-2 border-b-[3px] border-t-0 border-[#b4b4b4] text-[10.6px]">
      <Header />
      <div className="flex flex-1">
        <div className="flex-1">
          <div className="ml-[19px]">
            {rowData.map((r, i) => (
              <Row key={i} r={r} i={i} />
            ))}
          </div>
        </div>
        <Scrollbar />
      </div>
      <div className="flex h-[29px] items-center border-t-2 border-[#c4c4c4] text-[#444]">
        <div className="ml-[286px] h-[23px] w-[213px] border border-[#b4b4b4] pr-[5px] text-right leading-[21px]">46</div>
        <div className="ml-[656px] h-[23px] w-[137px] border border-[#b4b4b4] pr-[6px] text-right leading-[21px]">AVG=13</div>
      </div>
    </div>
  </div>
);

const StatusBar = () => (
  <div className="flex h-[24px] items-center bg-[#0072c6] pl-[7px] text-[10.6px] text-white">
    <span>User: AliceK_001000</span>
    <span className="ml-[11px]">Client ID: PSI001000AK2</span>
    <span className="ml-[11px]">Memory Usage: 191MB</span>
    <span className="ml-[12px]">Version: 18.0.12</span>
    <svg width="8" height="8" viewBox="0 0 8 8" className="ml-auto mr-[2px] mt-[12px]">
      <path d="M6 0h2v2H6zM3 3h2v2H3zM6 3h2v2H6zM0 6h2v2H0zM3 6h2v2H3zM6 6h2v2H6z" fill="#9cc8ec" />
    </svg>
  </div>
);

export default function App() {
  return (
    <div className="h-[908px] w-[1496px] overflow-hidden bg-gradient-to-b from-[#175773] to-[#1b6a8b] pl-[5px] pt-[4px] font-['Noto_Sans',sans-serif]">
      <div className="flex h-[900px] w-[1487px] flex-col border-t border-[#0072c6] bg-white">
        <Defs />
        <TitleBar />
        <TabRow />
        <Ribbon />
        <div className="flex flex-1 gap-[4px] pl-[2px] pt-[1px]">
          <NavPanel />
          <Content />
        </div>
        <div className="h-[3px]" />
        <StatusBar />
      </div>
    </div>
  );
}
